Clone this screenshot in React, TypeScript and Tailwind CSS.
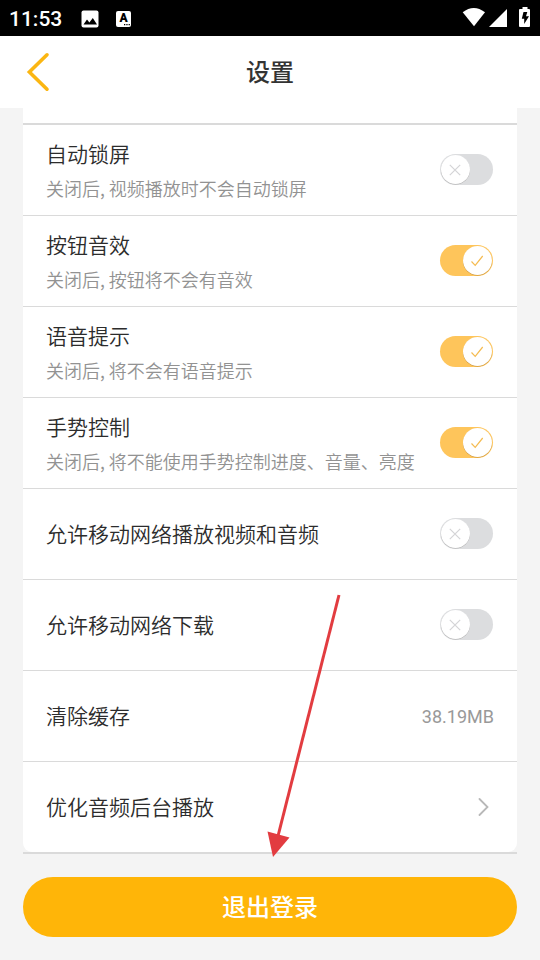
import { FC } from "react";

interface RowProps {
  title: string;
  description?: string;
  checked?: boolean;
  value?: string;
  link?: boolean;
}

const rows: RowProps[] = [
  { title: "自动锁屏", description: "关闭后, 视频播放时不会自动锁屏", checked: false },
  { title: "按钮音效", description: "关闭后, 按钮将不会有音效", checked: true },
  { title: "语音提示", description: "关闭后, 将不会有语音提示", checked: true },
  {
    title: "手势控制",
    description: "关闭后, 将不能使用手势控制进度、音量、亮度",
    checked: true,
  },
  { title: "允许移动网络播放视频和音频", checked: false },
  { title: "允许移动网络下载", checked: false },
  { title: "清除缓存", value: "38.19MB" },
  { title: "优化音频后台播放", link: true },
];

const StatusBar: FC = () => {
  return (
    <div className="flex h-9 shrink-0 items-center justify-between bg-black text-white">
      <div className="flex items-center pl-[9px]">
        <span className="w-[72px] pt-px text-[21px] leading-9 font-medium">
          11:53
        </span>
        <svg className="mt-px" width="18" height="18" viewBox="0 0 18 18">
          <rect x="0.5" y="0.5" width="17" height="17" rx="2" fill="#fff" />
          <path d="M2.5 14.5L6 9.5l2.4 3 3.4-4.5 4.2 6.5z" fill="#000" />
        </svg>
        <div className="relative mt-px ml-[17px] h-4 w-[15px] rounded-[2px] bg-white">
          <span className="absolute inset-x-0 top-0 text-center text-[12px] leading-[14px] font-black text-black">
            A
          </span>
          <svg className="absolute right-px bottom-px" width="6" height="2" viewBox="0 0 6 2">
            <path d="M0 0h1.3v1.3H0zM2.3 0h1.3v1.3H2.3zM4.6 0h1.3v1.3H4.6z" fill="#000" />
          </svg>
        </div>
      </div>
      <svg width="78" height="36" viewBox="0 0 78 36" fill="#fff">
        <path d="M0.7 12.3Q11.8 3.7 23 12.3L12 26.3z" />
        <path d="M45 9v18H27z" />
        <path d="M58 9h2.5V7h5v2H67q1 0 1 1v16q0 1-1 1H58q-1 0-1-1V10q0-1 1-1z" />
        <path d="M61.5 12h3.8l-1.3 4.2h3L62.2 24v-5.3h-2.4z" fill="#000" />
      </svg>
    </div>
  );
};

const Toggle: FC<{ checked: boolean }> = ({ checked }) => {
  return (
    <div
      className={
        checked
          ? "-mt-px flex h-[31px] w-[53px] items-center justify-end rounded-full bg-[#fec55b] px-px"
          : "-mt-px flex h-[31px] w-[53px] items-center justify-start rounded-full bg-[#dcdddf] px-px"
      }
    >
      <div
        className={
          checked
            ? "flex size-[29px] items-center justify-center rounded-full bg-white pr-0.5 shadow-[0_0.5px_0.5px_#c08a30]"
            : "flex size-[29px] items-center justify-center rounded-full bg-white pr-0.5 shadow-[0_0.5px_0.5px_#aaa]"
        }
      >
        {checked ? (
          <svg width="14" height="12" viewBox="0 0 14 12" fill="none" stroke="#f5bb50">
            <path d="M1.5 6.5L5.2 10.3 12.7 1" strokeWidth="1.2" />
          </svg>
        ) : (
          <svg width="12" height="12" viewBox="0 0 12 12" fill="none" stroke="#d4d4d6">
            <path d="M0.8 0.8l10.4 10.4M11.2 0.8L0.8 11.2" strokeWidth="1.2" />
          </svg>
        )}
      </div>
    </div>
  );
};

const Row: FC<RowProps> = ({ title, description, checked, value, link }) => {
  return (
    <div className="flex h-[91px] items-center justify-between border-b border-[#dadada] pr-6 pl-[23px] last:h-[90px] last:border-b-0">
      <div className="flex flex-col gap-1 pt-px whitespace-nowrap">
        <h5 className="text-[21px] leading-[30px] font-[350] text-[#2c2c2c]">{title}</h5>
        {description && (
          <p className="font-['Noto_Sans_CJK_SC',sans-serif] text-[18px] leading-[28px] font-[350] text-[#929292]">
            {description}
          </p>
        )}
      </div>
      {checked !== undefined && <Toggle checked={checked} />}
      {value && <span className="-mr-px pt-0.5 text-[18px] leading-7 text-[#999]">{value}</span>}
      {link && (
        <svg
          className="mr-1"
          width="11"
          height="18"
          viewBox="0 0 11 18"
          fill="none"
          stroke="#b8b8b8"
          strokeWidth="1.8"
          strokeLinecap="round"
        >
          <path d="M1.5 1l8 8-8 8" />
        </svg>
      )}
    </div>
  );
};

const App: FC = () => {
  return (
    <div className="relative flex h-[960px] w-[540px] flex-col overflow-hidden bg-[#f4f4f4] font-[Roboto,'Noto_Sans_CJK_SC',sans-serif]">
      <StatusBar />
      <header className="grid h-[72px] shrink-0 grid-cols-[1fr_auto_1fr] items-center bg-white">
        <svg
          className="ml-[26px]"
          width="24"
          height="40"
          viewBox="0 0 24 40"
          fill="none"
          stroke="#fbb612"
          strokeWidth="3.6"
          strokeLinecap="round"
        >
          <path d="M21 2.8L3.4 20 21 37.2" />
        </svg>
        <h1 className="pt-0.5 text-[24px] leading-9 font-medium text-[#333]">设置</h1>
      </header>
      <main className="flex flex-col px-[23px]">
        <div className="h-[17px] border-b-2 border-[#dadada] bg-white" />
        <div className="border-b-2 border-[#dadada]">
          <div className="rounded-b-[9px] bg-white">
            {rows.map((row) => (
              <Row key={row.title} {...row} />
            ))}
          </div>
        </div>
        <button className="mt-[23px] h-[60px] rounded-full bg-[#ffb508] pt-0.5 text-[24px] font-medium text-white">
          退出登录
        </button>
      </main>
      {/* pointer to the logout button */}
      <svg
        className="pointer-events-none absolute top-[590px] left-[260px]"
        width="90"
        height="270"
        viewBox="0 0 90 270"
      >
        <path d="M79 5L17 250" stroke="#e23c40" strokeWidth="3" />
        <path d="M7.5 241.5L29.5 247.5 13 267z" fill="#e23c40" />
      </svg>
    </div>
  );
};

export default App;
